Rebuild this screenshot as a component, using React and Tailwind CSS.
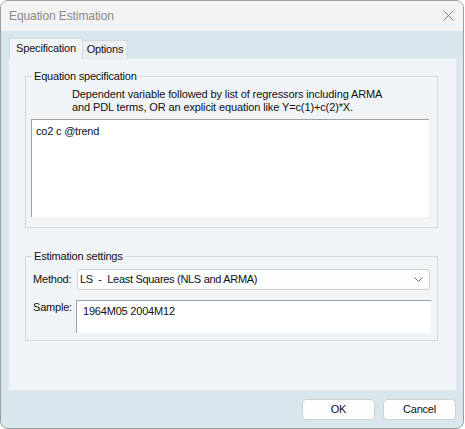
import { useState } from "react";

const font = { fontFamily: '"Liberation Sans", Arial, sans-serif' };

function GroupBox({ label, className, children }) {
  return (
    <div className={`relative border border-[#d6d9dc] ${className}`}>
      <span className="absolute -top-[9px] left-[6px] bg-[#f0f4f7] px-[2px] text-[11px] leading-[16px] tracking-[-0.2px] text-[#111]">
        {label}
      </span>
      {children}
    </div>
  );
}

export default function App() {
  const [spec, setSpec] = useState("co2 c @trend");
  const [sample, setSample] = useState("1964M05 2004M12");

  return (
    <div
      className="flex h-[429px] w-[464px] flex-col overflow-hidden rounded-lg border border-[#9d9d9d] bg-[#dae6ee] text-[#111]"
      style={font}
    >
      <div className="flex h-[30px] shrink-0 items-center justify-between bg-[#f3f3f3] pl-2 pr-[9px]">
        <span className="text-[12px] tracking-[-0.1px] text-[#8a8a8a]">Equation Estimation</span>
        <svg width="11" height="11" viewBox="0 0 11 11" className="mb-[1px]">
          <path d="M0.5 0.5 L10.5 10.5 M10.5 0.5 L0.5 10.5" stroke="#808080" strokeWidth="1" />
        </svg>
      </div>

      <div className="flex flex-1 flex-col">
        <div className="mt-[7px] flex h-[20px] items-end pl-2">
          <div className="relative z-10 -mb-px flex h-[21px] w-[74px] items-center justify-center border border-b-0 border-[#d6d9dc] bg-[#f0f4f7] pb-[1px] text-[11px] tracking-[-0.2px]">
            Specification
          </div>
          <div className="flex h-[18px] w-[45px] items-center justify-center border border-b-0 border-l-0 border-[#d6d9dc] bg-[#eceff2] text-[11px] tracking-[-0.2px]">
            Options
          </div>
        </div>

        <div className="ml-[7px] flex h-[333px] w-[449px] flex-col border border-[#e4e8eb] bg-[#f0f4f7]">
          <GroupBox label="Equation specification" className="ml-4 mt-[17px] h-[152px] w-[413px]">
            <div className="pl-[46px] pt-[11px] text-[11px] leading-[13px] tracking-[-0.12px]">
              <p>Dependent variable followed by list of regressors including ARMA</p>
              <p>and PDL terms, OR an explicit equation like Y=c(1)+c(2)*X.</p>
            </div>
            <textarea
              value={spec}
              onChange={(e) => setSpec(e.target.value)}
              className="ml-[5px] mt-[5px] block h-[98px] w-[398px] resize-none border-l border-t border-[#a0a0a0] bg-white px-[4px] py-[3px] text-[11px] leading-[16px] tracking-[-0.2px] outline-none"
            />
          </GroupBox>

          <GroupBox label="Estimation settings" className="ml-4 mt-[28px] h-[85px] w-[413px]">
            <div className="mt-[12px] flex items-center">
              <span className="w-[44px] pl-[7px] text-[11px] tracking-[-0.2px]">Method:</span>
              <div className="ml-[7px] flex h-[21px] w-[353px] items-center justify-between rounded-[3px] border border-[#cfd2d5] bg-[#fdfdfd] pl-[2px] pr-[6px]">
                <span className="whitespace-pre text-[11px] tracking-[-0.3px]">LS  -  Least Squares (NLS and ARMA)</span>
                <svg width="9" height="5" viewBox="0 0 9 5">
                  <path d="M0.5 0.5 L4.5 4.5 L8.5 0.5" fill="none" stroke="#6a6a6a" strokeWidth="1" />
                </svg>
              </div>
            </div>
            <div className="mt-[10px] flex items-start">
              <span className="w-[44px] pl-[7px] text-[11px] leading-[14px] tracking-[-0.2px]">Sample:</span>
              <input
                value={sample}
                onChange={(e) => setSample(e.target.value)}
                className="ml-[6px] h-[33px] w-[355px] border-l border-t border-[#a0a0a0] bg-white px-[6px] pb-[12px] text-[11px] tracking-[-0.2px] outline-none"
              />
            </div>
          </GroupBox>
        </div>

        <div className="mr-[7px] mt-[8px] flex justify-end gap-[8px]">
          <button className="h-[21px] w-[73px] rounded-[4px] border border-[#d0d0d0] bg-[#fdfdfd] text-[11px] tracking-[-0.2px]">
            OK
          </button>
          <button className="h-[21px] w-[73px] rounded-[4px] border border-[#d0d0d0] bg-[#fdfdfd] text-[11px] tracking-[-0.2px]">
            Cancel
          </button>
        </div>
      </div>
    </div>
  );
}
